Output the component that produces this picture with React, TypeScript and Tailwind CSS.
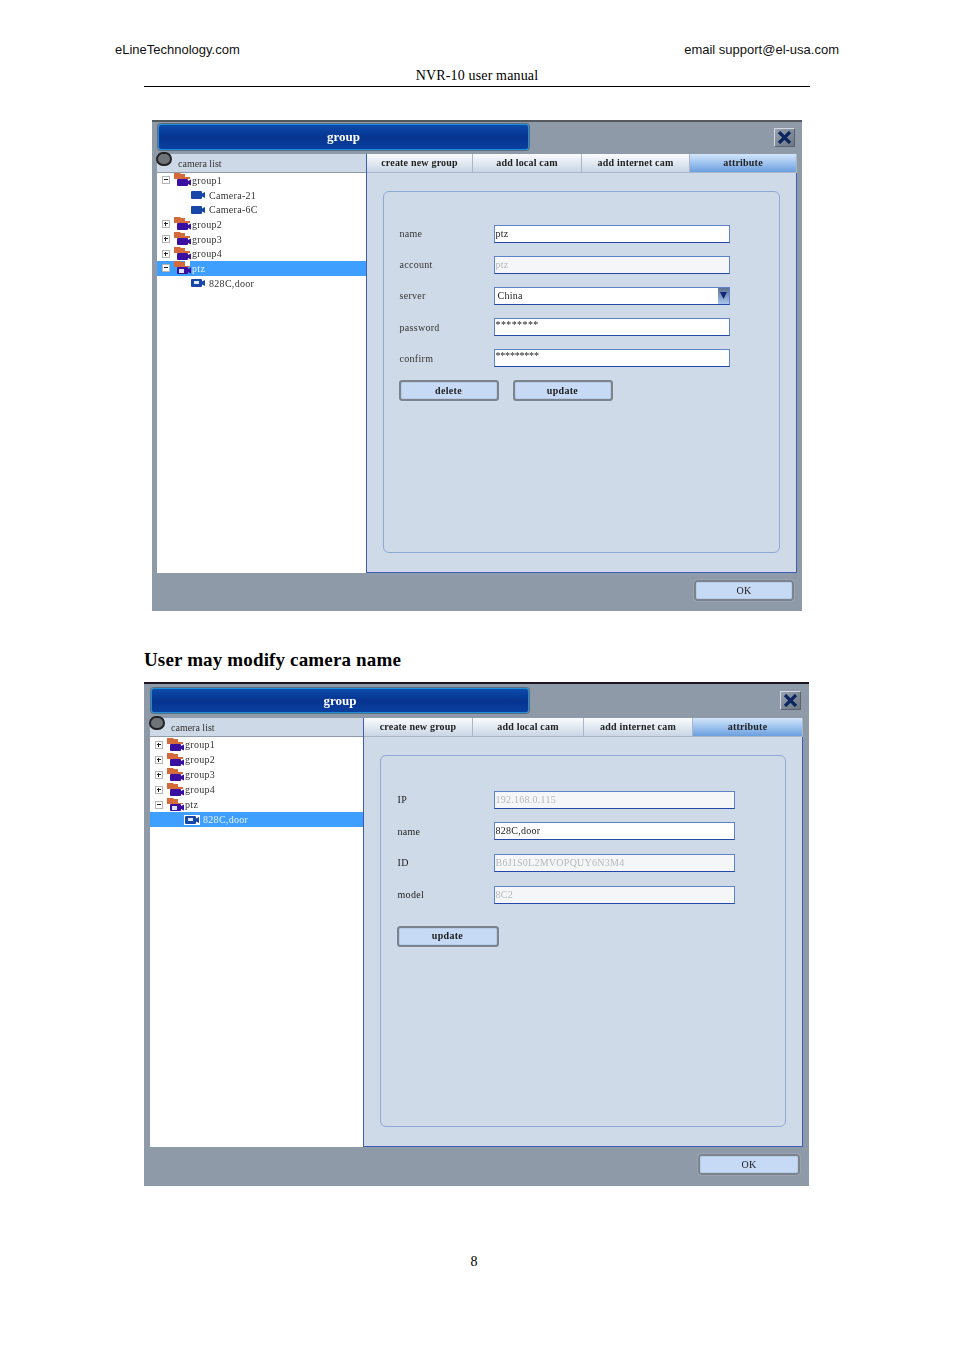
const serif = "font-['Liberation_Serif',serif]";

type TreeRow = {
  label: string;
  icon: "group" | "ptz" | "cam" | "ip";
  toggle?: "+" | "-";
  child?: boolean;
  selected?: boolean;
};

const TREE_A: TreeRow[] = [
  { label: "group1", icon: "group", toggle: "-" },
  { label: "Camera-21", icon: "cam", child: true },
  { label: "Camera-6C", icon: "cam", child: true },
  { label: "group2", icon: "group", toggle: "+" },
  { label: "group3", icon: "group", toggle: "+" },
  { label: "group4", icon: "group", toggle: "+" },
  { label: "ptz", icon: "ptz", toggle: "-", selected: true },
  { label: "828C,door", icon: "ip", child: true },
];

const TREE_B: TreeRow[] = [
  { label: "group1", icon: "group", toggle: "+" },
  { label: "group2", icon: "group", toggle: "+" },
  { label: "group3", icon: "group", toggle: "+" },
  { label: "group4", icon: "group", toggle: "+" },
  { label: "ptz", icon: "ptz", toggle: "-" },
  { label: "828C,door", icon: "ip", child: true, selected: true },
];

const TABS = ["create new group", "add local cam", "add internet cam", "attribute"];

function GroupIcon({ ptz }: { ptz?: boolean }) {
  return (
    <svg width="17" height="14" viewBox="0 0 17 14" className="shrink-0">
      <path d="M0 0h6l1 1h4v3h5v2H0z" fill="#d4693a" />
      <rect x="3" y="6" width="11" height="7" rx="1" fill="#3a0ea0" />
      <path d="M14 8l3-1.500v6L14 11z" fill="#3a0ea0" />
      {ptz && <rect x="11" y="0" width="5" height="5" fill="#fff" />}
      {ptz && <rect x="5" y="8" width="5" height="4" fill="#d8e4f8" />}
    </svg>
  );
}

function CamIcon({ ip, light }: { ip?: boolean; light?: boolean }) {
  return (
    <svg width="16" height="10" viewBox="0 0 16 10" className="shrink-0">
      {light && <rect x="0" y="0" width="16" height="10" fill="#fff" />}
      <rect x="1" y="1" width="11" height="8" rx="1" fill="#1546a8" />
      <path d="M12 3.500l3-1.500v6l-3-1.500z" fill="#1546a8" />
      {ip && <rect x="4" y="3" width="5" height="3" fill="#dfe9fb" />}
    </svg>
  );
}

function Toggle({ sign }: { sign: "+" | "-" }) {
  return (
    <span className="relative h-2 w-2 shrink-0 border border-[#b4b4b4] bg-white">
      <span className="absolute left-px top-[2px] h-px w-1 bg-[#222]" />
      {sign === "+" && <span className="absolute left-[2px] top-px h-1 w-px bg-[#222]" />}
    </span>
  );
}

function CameraTree({
  rows,
  rowClass,
  parentClass,
  childClass,
}: {
  rows: TreeRow[];
  rowClass: string;
  parentClass: string;
  childClass: string;
}) {
  return (
    <ul className="flex-1 bg-white">
      {rows.map((row) => (
        <li
          key={row.label}
          className={`flex items-center text-[10px] tracking-[0.3px] ${rowClass} ${
            row.child ? childClass : parentClass
          } ${row.selected ? "bg-[#3f9fff] text-[#e6f1ff]" : "text-[#333]"}`}
        >
          {row.toggle && <Toggle sign={row.toggle} />}
          {row.icon === "group" && <span className="ml-[4px] mr-px"><GroupIcon /></span>}
          {row.icon === "ptz" && <span className="ml-[4px] mr-px"><GroupIcon ptz /></span>}
          {(row.icon === "cam" || row.icon === "ip") && (
            <span className="mr-[3px]">
              <CamIcon ip={row.icon === "ip"} light={row.selected} />
            </span>
          )}
          <span>{row.label}</span>
        </li>
      ))}
    </ul>
  );
}

function Field({
  value,
  disabled,
  maskClass,
  select,
}: {
  value: string;
  disabled?: boolean;
  maskClass?: string;
  select?: boolean;
}) {
  return (
    <div
      className={`flex h-[18px] justify-between border border-[#5f82c8] border-b-[#2448a8] pl-px text-[10px] leading-none ${
        disabled ? "bg-[#f5f6f7] text-[#b4b8be]" : "bg-white text-[#222]"
      } ${maskClass ? `items-start pt-px ${maskClass}` : "items-center tracking-[0.25px]"}`}
    >
      <span className={select ? "pl-[2px]" : ""}>{value}</span>
      {select && (
        <span className="flex h-4 w-[11px] items-center justify-center bg-gradient-to-b from-[#5e7290] to-[#a9c6ee]">
          <svg width="7" height="7" viewBox="0 0 7 7">
            <path d="M0 0h7L3.500 7z" fill="#12287c" />
          </svg>
        </span>
      )}
    </div>
  );
}

function SkinButton({ label, className, bold = true }: { label: string; className: string; bold?: boolean }) {
  return (
    <button
      className={`h-[21px] rounded-[3px] border-2 border-[#7b838e] bg-[#c6daf5] text-[10px] leading-none tracking-[0.3px] text-[#1c1c1c] shadow-[0_0_1px_#eef3f9,inset_0_0_1px_#4e5660] ${
        bold ? "font-bold" : ""
      } ${className}`}
    >
      {label}
    </button>
  );
}

function Window({
  className,
  titleRowClass,
  titleClass,
  closeClass,
  mainClass,
  treeColClass,
  tabsClass,
  footerClass,
  okClass,
  children,
  tree,
}: {
  className: string;
  titleRowClass: string;
  titleClass: string;
  closeClass: string;
  mainClass: string;
  treeColClass: string;
  tabsClass: string;
  footerClass: string;
  okClass: string;
  children: React.ReactNode;
  tree: React.ReactNode;
}) {
  return (
    <section className={`relative bg-[#8f9aa8] blur-[0.3px] ${className}`}>
      <div className={`flex items-start justify-between ${titleRowClass}`}>
        <div
          className={`flex items-center justify-center rounded-[3px] border border-[#1c8fd8] bg-gradient-to-b from-[#0d4bab] via-[#06348f] to-[#0a3f9f] text-[13px] font-bold text-white shadow-[0_0_0_1px_#5c6c82] ${titleClass}`}
        >
          group
        </div>
        <button
          className={`flex h-[19px] w-[21px] items-center justify-center border border-[#d3dae3] border-b-[#59626e] border-r-[#59626e] bg-gradient-to-br from-[#97a2ae] to-[#6d7783] ${closeClass}`}
        >
          <svg width="15" height="13" viewBox="0 0 15 13">
            <path d="M2 1l11 11M13 1L2 12" stroke="#0b2560" strokeWidth="3.200" fill="none" />
          </svg>
        </button>
      </div>

      <div className={`flex ${mainClass}`}>
        <div className={`relative flex flex-col border-r border-[#3f5cb8] ${treeColClass}`}>
          <span className="absolute -left-px -top-[2px] h-[14px] w-[16px] rounded-full border-2 border-[#222] bg-[#6f7479]" />
          <div className="flex h-[19px] shrink-0 items-center border-b border-[#8f9aa8] bg-[#cdd9e7] text-[10px] text-[#333]">
            <span className="pl-[21px]">camera list</span>
          </div>
          {tree}
        </div>

        <div className="flex min-w-0 flex-1 flex-col">
          <div className={`grid h-[19px] shrink-0 ${tabsClass}`}>
            {TABS.map((tab) => (
              <div
                key={tab}
                className={`flex items-center justify-center border-r border-[#aab6c6] pb-px text-[10px] font-bold tracking-[0.2px] text-[#222] ${
                  tab === "attribute"
                    ? "border-b border-[#2f55b5] bg-gradient-to-b from-[#d3e6fa] to-[#6b9fe0]"
                    : "border-b border-[#3f5cb8] bg-gradient-to-b from-[#fafcfd] to-[#c9d6e6]"
                }`}
              >
                {tab}
              </div>
            ))}
          </div>
          <div className="flex flex-1 border-b border-r border-[#3f5cb8] bg-[#cedae8] pb-[19px] pl-4 pr-4 pt-[18px]">
            <div className="flex-1 rounded-[6px] border-[1.500px] border-[#8fa8d6]">{children}</div>
          </div>
        </div>
      </div>

      <div className={`flex justify-end ${footerClass}`}>
        <SkinButton label="OK" className={okClass} bold={false} />
      </div>
    </section>
  );
}

export default function App() {
  return (
    <div className={`h-[1350px] w-[954px] overflow-hidden bg-white pt-[42px] text-black ${serif}`}>
      <header className="flex justify-between pl-[115px] pr-[115px] font-['Liberation_Sans',sans-serif] text-[13px] leading-4 text-[#111]">
        <span>eLineTechnology.com</span>
        <span>email support@el-usa.com</span>
      </header>
      <div className="mx-[144px] mt-[10px] border-b border-black pb-[2px] text-center text-[14px] leading-4 tracking-[0.15px]">
        NVR-10 user manual
      </div>

      <Window
        className="ml-[152px] mt-[33px] h-[491px] w-[650px] border-t-2 border-[#55585c]"
        titleRowClass="h-[32px] pl-[6px] pr-[7px] pt-[2px]"
        titleClass="h-[26px] w-[371px]"
        closeClass="mt-[4px]"
        mainClass="h-[419px] pl-[5px] pr-[5px]"
        treeColClass="w-[210px]"
        tabsClass="grid-cols-[106px_109px_108px_107px]"
        footerClass="pr-[8px] pt-[7px]"
        okClass="w-[100px]"
        tree={
          <CameraTree
            rows={TREE_A}
            rowClass="h-[14.700px]"
            parentClass="pl-[5px]"
            childClass="pl-[33px]"
          />
        }
      >
        <div className="pl-[14.500px] pt-[32.500px]">
          <div className="grid grid-cols-[95px_236px] items-center gap-y-[13.200px] text-[10px] tracking-[0.3px] text-[#333]">
            <span className="pl-px">name</span>
            <Field value="ptz" />
            <span className="pl-px">account</span>
            <Field value="ptz" disabled />
            <span className="pl-px">server</span>
            <Field value="China" select />
            <span className="pl-px">password</span>
            <Field value="********" maskClass="tracking-[0.4px]" />
            <span className="pl-px">confirm</span>
            <Field value="*********" maskClass="tracking-[-0.2px]" />
          </div>
          <div className="mt-[13px] flex gap-[14px]">
            <SkinButton label="delete" className="w-[100px]" />
            <SkinButton label="update" className="w-[100px]" />
          </div>
        </div>
      </Window>

      <h2 className="ml-[144px] mt-[37px] text-[19px] font-bold leading-6 tracking-[0.15px]">
        User may modify camera name
      </h2>

      <Window
        className="ml-[144px] mt-[10px] h-[504px] w-[665px] border-t-2 border-[#1c1420]"
        titleRowClass="h-[34px] pl-[7px] pr-[8px] pt-[4px]"
        titleClass="h-[25px] w-[378px]"
        closeClass="mt-[3px]"
        mainClass="h-[429px] pl-[6px] pr-[6px]"
        treeColClass="w-[214px]"
        tabsClass="grid-cols-[109px_111px_109px_110px]"
        footerClass="pr-[9px] pt-[7px]"
        okClass="w-[102px]"
        tree={
          <CameraTree
            rows={TREE_B}
            rowClass="h-[15px]"
            parentClass="pl-[5px]"
            childClass="pl-[34px]"
          />
        }
      >
        <div className="pl-[14.500px] pt-[34.500px]">
          <div className="grid grid-cols-[98px_241px] items-center gap-y-[13.700px] text-[10px] tracking-[0.3px] text-[#222]">
            <span className="pl-[2px]">IP</span>
            <Field value="192.168.0.115" disabled />
            <span className="pl-[2px]">name</span>
            <Field value="828C,door" />
            <span className="pl-[2px]">ID</span>
            <Field value="B6J1S0L2MVOPQUY6N3M4" disabled />
            <span className="pl-[2px]">model</span>
            <Field value="8C2" disabled />
          </div>
          <div className="ml-px mt-[22px] flex">
            <SkinButton label="update" className="w-[102px]" />
          </div>
        </div>
      </Window>

      <p className="mt-[67px] pr-[6px] text-center text-[14px] leading-[18px]">8</p>
    </div>
  );
}
